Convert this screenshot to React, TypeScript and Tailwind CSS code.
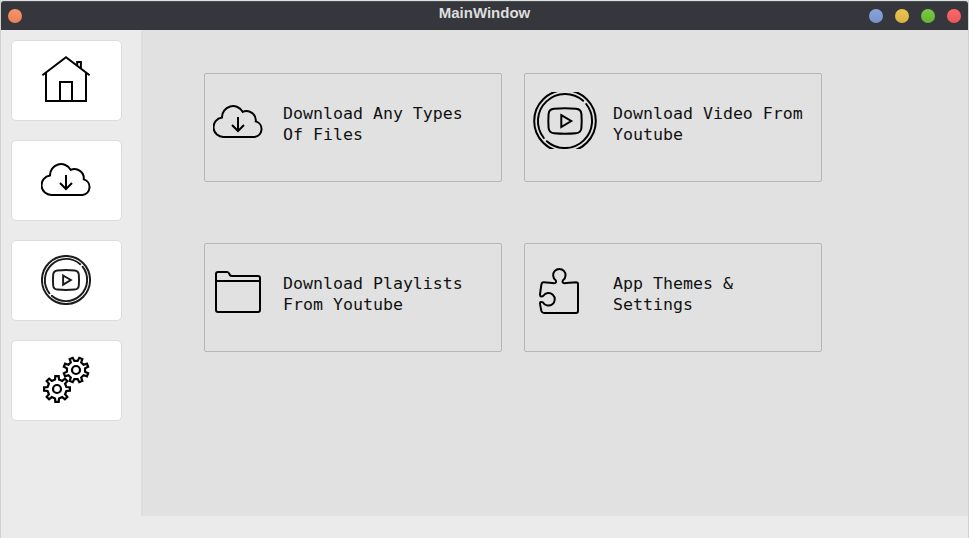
import type { ReactNode } from "react";

type IconProps = { className?: string; stroke?: number };

function HomeIcon() {
  return (
    <svg width="50" height="50" viewBox="0 0 50 50" fill="none" stroke="#000" strokeWidth="2">
      <path d="M1.4 20.3 25 2.2 48.6 20.3" />
      <path d="M5 18V46H45V18M19 46V27H31V46" />
      <path d="M36.2 10.5V7H39.9V13.3" strokeWidth="2" />
    </svg>
  );
}

function CloudIcon() {
  return (
    <svg width="50" height="50" viewBox="0 0 50 50" fill="none" stroke="#000" strokeWidth="2">
      <path d="M10.8 40A9.8 9.8 0 0 1 9 20.5A11 11 0 0 1 29.7 14.9A9.4 9.4 0 0 1 42.8 24.4A8 8 0 0 1 41.6 40Z" />
      <path d="M25 20V34M19 28 25 34 31 28" />
    </svg>
  );
}

function VideoIcon({ className, stroke = 2 }: IconProps) {
  return (
    <svg className={className} viewBox="-32 -32 64 64" fill="none" stroke="currentColor" strokeWidth={stroke}>
      <circle r="30.8" />
      <g strokeLinecap="round">
        <path d="M21.2 -17A27.2 27.2 0 0 1 -18.2 20.2" />
        <path d="M-21.2 17A27.2 27.2 0 0 1 18.2 -20.2" />
      </g>
      <path d="M-11 -12.2Q0 -13.2 11 -12.2Q16 -11.8 16.4 -7Q17 0 16.4 7Q16 11.8 11 12.2Q0 13.2 -11 12.2Q-16 11.8 -16.4 7Q-17 0 -16.4 -7Q-16 -11.8 -11 -12.2Z" />
      <path d="M-3.7 -5.8 6.2 0 -3.7 6Z" />
    </svg>
  );
}

function gearPath(cx: number, cy: number, outer: number, inner: number, turn: number) {
  const points: string[] = [];
  const add = (r: number, deg: number) => {
    const a = ((deg + turn) * Math.PI) / 180;
    points.push(`${(cx + r * Math.cos(a)).toFixed(2)} ${(cy + r * Math.sin(a)).toFixed(2)}`);
  };
  for (let i = 0; i < 8; i++) {
    const d = i * 45;
    add(inner, d - 12);
    add(outer, d - 7.5);
    add(outer, d + 7.5);
    add(inner, d + 12);
  }
  return `M${points.join("L")}Z`;
}

function GearsIcon() {
  return (
    <svg width="50" height="50" viewBox="0 0 50 50" fill="none" stroke="#000" strokeWidth="2.2">
      <path d={gearPath(16, 34, 13, 9.6, 0)} />
      <circle cx="16" cy="34" r="4" />
      <path d={gearPath(35, 15, 12.6, 9.2, 22.5)} />
      <circle cx="35" cy="15" r="4" />
    </svg>
  );
}

function FolderIcon() {
  return (
    <svg width="50" height="50" viewBox="0 0 50 50" fill="none" stroke="#000" strokeWidth="2">
      <path d="M3 43V7Q3 5 5 5H14Q15.5 5 16.4 7L16.8 8Q17.3 9 19 9H45Q47 9 47 11V43Q47 45 45 45H5Q3 45 3 43ZM3 14H47" />
    </svg>
  );
}

function PuzzleIcon() {
  return (
    <svg width="50" height="50" viewBox="0 0 50 50" fill="none" stroke="#000" strokeWidth="2">
      <path d="M10 16.2C14 16.6 17 17 20 17.3C22.3 17.3 22.6 15.5 21.5 14A6.2 6.2 0 1 1 29.2 14C28 15.5 28.4 17.3 30.5 17.3C34 17 38 16.5 42 16.2Q44 16.2 44 18V45Q44 47 42 47H10Q8 47 7.4 45C6.8 42 6.3 40 6 37.5C5.9 35.8 7.4 35.6 9 36.4A6.3 6.3 0 1 0 9.3 29.7C8 31 5.8 30.8 6 28.7C6.4 25 6.8 22 7.5 18Q7.8 16 10 16.2Z" />
    </svg>
  );
}

function NavButton({ label, children }: { label: string; children: ReactNode }) {
  return (
    <button
      aria-label={label}
      className="flex h-[81px] w-[111px] items-center justify-center rounded-[5px] border border-[#dcdcdc] bg-white pr-px pb-px"
    >
      {children}
    </button>
  );
}

function Card({ icon, wide, lines }: { icon: ReactNode; wide?: boolean; lines: [string, string] }) {
  return (
    <button className="flex h-[109px] w-[298px] items-start rounded-[2px] border border-[#b6b6b6] pl-2 text-left">
      <span className={wide ? "w-20 shrink-0" : "w-[70px] shrink-0"}>{icon}</span>
      <span className="pt-[29px] font-['DejaVu_Sans_Mono',monospace] text-[16.6px] leading-[21px] whitespace-nowrap text-[#111111]">
        {lines[0]}
        <br />
        {lines[1]}
      </span>
    </button>
  );
}

export default function App() {
  return (
    <div className="flex h-[538px] w-[969px] flex-col overflow-hidden border-x border-t border-x-[#d0d0d0] border-t-[#dce3df] bg-[#ebebeb]">
      <header className="flex h-[29px] shrink-0 items-center justify-between rounded-t-[3px] border-t border-[#4b4d50] bg-[#36373c] px-[7px]">
        <div className="flex w-[92px]">
          <span className="size-3.5 rounded-full bg-linear-to-b from-[#f9936a] to-[#e68158]" />
        </div>
        <h1 className="pb-[7px] font-['Liberation_Sans',sans-serif] text-[15px] leading-5 font-bold text-[#dedede]">
          MainWindow
        </h1>
        <div className="flex gap-3">
          <span className="size-3.5 rounded-full bg-linear-to-b from-[#87a5dc] to-[#7892c8]" />
          <span className="size-3.5 rounded-full bg-linear-to-b from-[#ecc44e] to-[#d9b244]" />
          <span className="size-3.5 rounded-full bg-linear-to-b from-[#7bc843] to-[#69b235]" />
          <span className="size-3.5 rounded-full bg-linear-to-b from-[#ff6767] to-[#e95858]" />
        </div>
      </header>
      <div className="flex h-[486px]">
        <nav className="flex w-[140px] shrink-0 flex-col gap-[19px] pt-2.5 pl-2.5">
          <NavButton label="Home"><HomeIcon /></NavButton>
          <NavButton label="Files"><CloudIcon /></NavButton>
          <NavButton label="Youtube"><VideoIcon stroke={2.5} className="size-[50px] text-[#1c1c1c]" /></NavButton>
          <NavButton label="Settings"><GearsIcon /></NavButton>
        </nav>
        <main className="grid flex-1 auto-rows-[109px] grid-cols-[298px_298px] gap-x-[22px] gap-y-[61px] rounded-tl-[3px] border-l-2 border-[#dddddd] bg-[#e1e1e1] pt-[43px] pl-[61px]">
          <Card icon={<div className="pt-[23px]"><CloudIcon /></div>} lines={["Download Any Types", "Of Files"]} />
          <Card
            wide
            icon={
              <div className="mt-[18px] flex h-[57px] w-16 items-center overflow-hidden">
                <VideoIcon className="size-16 shrink-0 text-black" />
              </div>
            }
            lines={["Download Video From", "Youtube"]}
          />
          <Card icon={<div className="pt-[23px]"><FolderIcon /></div>} lines={["Download Playlists", "From Youtube"]} />
          <Card wide icon={<div className="pt-[22px] pl-px"><PuzzleIcon /></div>} lines={["App Themes &", "Settings"]} />
        </main>
      </div>
    </div>
  );
}
